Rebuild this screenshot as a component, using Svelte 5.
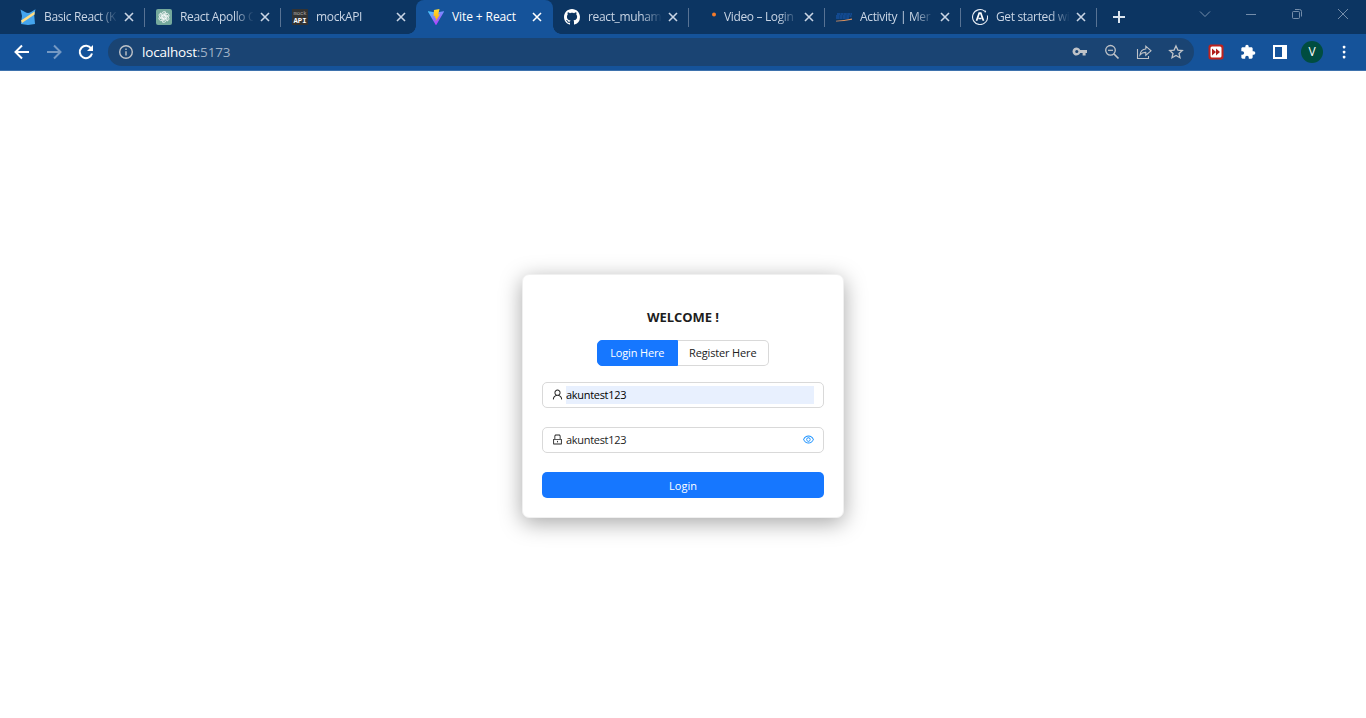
<script>
  const tabs = [
    { icon: 'kampus', title: 'Basic React (K' },
    { icon: 'gpt', title: 'React Apollo C' },
    { icon: 'mock', title: 'mockAPI' },
    { icon: 'vite', title: 'Vite + React', active: true },
    { icon: 'github', title: 'react_muham' },
    { icon: 'video', title: 'Video – Login' },
    { icon: 'activity', title: 'Activity | Mer' },
    { icon: 'apollo', title: 'Get started wi' }
  ];
  const petals = [0, 60, 120, 180, 240, 300];
</script>

<div class="browser">
  <div class="strip">
    {#each tabs as tab, i}
      <div class="tab" class:active={tab.active} class:divided={!tab.active && i !== 2}>
        <svg class="fav" viewBox="0 0 16 16">
          {#if tab.icon === 'kampus'}
            <path d="M.5 .5 5 3Q8 5 11 3L15.5 .3 14.2 6 15 15 8 16 1 15 2 7Z" fill="#45a5ee" />
            <path d="M1 11.6 14.6 2.6v2.8L2 14Z" fill="#ffdc83" />
          {:else if tab.icon === 'gpt'}
            <rect width="16" height="16" rx="2" fill="#75a99c" />
            <g fill="none" stroke="#fff" stroke-width=".75">
              {#each petals as a}
                <path d="M5.9 9.2V4.6Q6.2 2.7 8.1 2.6 9.3 2.6 10 3.4L6.9 5.2V8.6" transform="rotate({a} 8 8)" />
              {/each}
            </g>
          {:else if tab.icon === 'mock'}
            <rect width="16" height="16" fill="#333" />
            <text x="1.5" y="6" font-size="5.6" fill="#aaa" textLength="13">mock</text>
            <text x="1.5" y="13.6" font-size="7.2" font-weight="700" fill="#fff" textLength="13">API</text>
          {:else if tab.icon === 'vite'}
            <defs>
              <linearGradient id="tri" x1="0" y1="0" x2=".6" y2="1"><stop stop-color="#41d1ff" /><stop offset="1" stop-color="#bd34fe" /></linearGradient>
              <linearGradient id="bolt" x1="0" y1="0" x2="0" y2="1"><stop stop-color="#ffdd35" /><stop offset="1" stop-color="#ffa800" /></linearGradient>
            </defs>
            <path d="M.2 2.2 8 3.6 15.8 2.2Q16.2 2.4 16 2.8L8.4 15.8Q8 16.2 7.6 15.8L0 2.8Q-.2 2.3.2 2.2Z" fill="url(#tri)" />
            <path d="M11.5 0 6 1.1 5.6 7.2 7.3 6.9 6.8 9.3 8.2 9 7.6 12.6 12 5.2 10.2 5.5Z" fill="url(#bolt)" />
          {:else if tab.icon === 'github'}
            <path fill="#fff" d="M8 0C3.58 0 0 3.58 0 8c0 3.54 2.29 6.53 5.47 7.59.4.07.55-.17.55-.38 0-.19-.01-.82-.01-1.49-2.01.37-2.53-.49-2.69-.94-.09-.23-.48-.94-.82-1.13-.28-.15-.68-.52-.01-.53.63-.01 1.08.58 1.23.82.72 1.21 1.87.87 2.33.66.07-.52.28-.87.51-1.07-1.78-.2-3.64-.89-3.64-3.95 0-.87.31-1.59.82-2.15-.08-.2-.36-1.02.08-2.12 0 0 .67-.21 2.2.82.64-.18 1.32-.27 2-.27s1.36.09 2 .27c1.53-1.04 2.2-.82 2.2-.82.44 1.1.16 1.92.08 2.12.51.56.82 1.27.82 2.15 0 3.07-1.87 3.75-3.65 3.95.29.25.54.73.54 1.48 0 1.07-.01 1.93-.01 2.2 0 .21.15.46.55.38A8.01 8.01 0 0 0 16 8c0-4.42-3.58-8-8-8Z" />
          {:else if tab.icon === 'video'}
            <circle cx="14" cy="5.5" r="2" fill="#f67b29" />
          {:else if tab.icon === 'activity'}
            <path d="M1 5H16M0 7H15.5M0 9H13" stroke="#14509f" stroke-width="1.5" stroke-dasharray="3 .4" />
            <path d="M0 11.8Q8 11.6 16 9.6V10.7Q8 12.4 0 12.6Z" fill="#d99261" />
          {:else}
            <path d="M12.6 2.1A7.5 7.5 0 1 0 15.4 6.5" fill="none" stroke="#e4eaf3" stroke-width="1.1" />
            <circle cx="13.2" cy="2.5" r=".9" fill="#e4eaf3" />
            <path d="M4.5 11.7 7.2 4.2H8.8L11.5 11.7M6.5 9.5H9.5" fill="none" stroke="#fff" stroke-width="1.7" />
          {/if}
        </svg>
        <span class="title">{tab.title}</span>
        <svg class="close" viewBox="0 0 10 10"><path d="M1 1 9 9M9 1 1 9" /></svg>
      </div>
    {/each}
    <svg class="plus" viewBox="0 0 12 12"><path d="M6 0V12M0 6H12" /></svg>
    <div class="window">
      <svg viewBox="0 0 12 12"><path d="M1 3.5 6 8.5 11 3.5" /></svg>
      <svg viewBox="0 0 12 12"><path d="M1 6.5H11" /></svg>
      <svg viewBox="0 0 12 12"><rect x="1.5" y="3.5" width="7" height="7" rx="1" /><path d="M4 1.5H8.5Q10.5 1.5 10.5 3.5V8.5" /></svg>
      <svg viewBox="0 0 12 12"><path d="M1 1 11 11M11 1 1 11" /></svg>
    </div>
  </div>

  <div class="toolbar">
    <div class="nav">
      <svg viewBox="0 0 16 16"><path d="M15 8H2M8 1.5 1.5 8 8 14.5" /></svg>
      <svg class="dim" viewBox="0 0 16 16"><path d="M1 8H14M8 1.5 14.5 8 8 14.5" /></svg>
      <svg viewBox="0 0 16 16"><path d="M13.2 4.6A6.2 6.2 0 1 0 14 9.6" /><path d="M15 1V7H9Z" class="solid" /></svg>
    </div>
    <div class="address">
      <svg class="info" viewBox="0 0 16 16"><circle cx="8" cy="8" r="6.3" /><path d="M8 7.2V11.5M8 4.5V6" /></svg>
      <span class="url"><b>localhost</b>:5173</span>
      <div class="actions">
        <svg viewBox="0 0 16 16"><path class="key" fill-rule="evenodd" d="M8.2 6A4 4 0 1 0 8.2 9H10.6V11.5H13.6V9H15V6ZM4.8 5.9A1.6 1.6 0 1 1 4.8 9.1A1.6 1.6 0 1 1 4.8 5.9Z" /></svg>
        <svg viewBox="0 0 16 16"><circle cx="6.5" cy="6.3" r="4.8" stroke-width="1.3" /><path d="M4 6.3H9" stroke-width="1.2" /><path d="M10 10 14.5 14.5" stroke-width="1.7" /></svg>
        <svg viewBox="0 0 16 16"><path d="M1.5 5V14.5H12.5V12M4 11Q4.7 5.2 9.8 5V2.2L15 6.8 9.8 11.2V8.4Q6.2 8.2 4 11Z" stroke-width="1.1" /></svg>
        <svg viewBox="0 0 16 16"><path d="M8 1.9 9.9 6.1 14.3 6.5 11 9.5 12 13.8 8 11.5 4 13.8 5 9.5 1.7 6.5 6.1 6.1Z" stroke-width="1.3" /></svg>
      </div>
    </div>
    <div class="ext">
      <svg viewBox="0 0 16 16"><rect x=".5" y=".5" width="15" height="15" rx="2.5" fill="#bd221e" /><rect x="2.5" y="2.5" width="11" height="11" rx="1.5" fill="#fff" /><path d="M4 4.5 8 8 4 11.5ZM8 4.5 12 8 8 11.5Z" fill="#b01c1b" /></svg>
      <svg viewBox="0 0 24 24"><path fill="#fff" d="M20.5 11H19V7c0-1.1-.9-2-2-2h-4V3.5a2.5 2.5 0 0 0-5 0V5H4c-1.1 0-2 .9-2 2v3.8h1.5a2.7 2.7 0 0 1 0 5.4H2V20c0 1.1.9 2 2 2h3.8v-1.5a2.7 2.7 0 0 1 5.4 0V22H17c1.1 0 2-.9 2-2v-4h1.5a2.5 2.5 0 0 0 0-5z" /></svg>
      <svg viewBox="0 0 16 16"><path fill="#fff" fill-rule="evenodd" d="M1 1H15V15H1ZM3 3V13H10V3Z" /></svg>
      <span class="avatar">V</span>
      <svg viewBox="0 0 16 16"><g fill="#fff"><rect x="6.8" y="1.8" width="2.6" height="2.6" rx=".8" /><rect x="6.8" y="6.8" width="2.6" height="2.6" rx=".8" /><rect x="6.8" y="11.8" width="2.6" height="2.6" rx=".8" /></g></svg>
    </div>
  </div>

  <main>
    <form class="card">
      <h1>WELCOME !</h1>
      <div class="switch">
        <span class="on">Login Here</span><span class="off">Register Here</span>
      </div>
      <div class="field first">
        <svg viewBox="64 64 896 896"><path d="M858.5 763.6a374 374 0 00-80.6-119.5 375.63 375.63 0 00-119.5-80.6c-.4-.2-.8-.3-1.2-.5C719.5 518 760 444.7 760 362c0-137-111-248-248-248S264 225 264 362c0 82.7 40.5 156 102.8 201.1-.4.2-.8.3-1.2.5-44.8 18.9-85 46-119.5 80.6a375.63 375.63 0 00-80.6 119.5A371.7 371.7 0 00136 901.8a8 8 0 008 8.2h60c4.4 0 7.9-3.5 8-7.8 2-77.2 33-149.5 87.8-204.3 56.7-56.7 132-87.9 212.2-87.9s155.5 31.2 212.2 87.9C779 752.7 810 825 812 902.2c.1 4.4 3.6 7.8 8 7.8h60a8 8 0 008-8.2c-1-47.8-10.9-94.3-29.5-138.2zM512 534c-45.9 0-89.1-17.9-121.6-50.4S340 407.9 340 362c0-45.9 17.9-89.1 50.4-121.6S466.1 190 512 190s89.1 17.9 121.6 50.4S684 316.1 684 362c0 45.9-17.9 89.1-50.4 121.6S557.9 534 512 534z" /></svg>
        <span class="value filled">akuntest123</span>
      </div>
      <div class="field">
        <svg viewBox="64 64 896 896"><path d="M832 464h-68V240c0-70.7-57.3-128-128-128H388c-70.7 0-128 57.3-128 128v224h-68c-17.7 0-32 14.3-32 32v384c0 17.7 14.3 32 32 32h640c17.7 0 32-14.3 32-32V496c0-17.7-14.3-32-32-32zM332 240c0-30.9 25.1-56 56-56h248c30.9 0 56 25.1 56 56v224H332V240zm460 600H232V536h560v304zM484 701v53c0 4.4 3.6 8 8 8h40c4.4 0 8-3.6 8-8v-53a48.01 48.01 0 10-56 0z" /></svg>
        <span class="value">akuntest123</span>
        <svg class="eye" viewBox="64 64 896 896"><path d="M942.2 486.2C847.4 286.5 704.1 186 512 186c-192.2 0-335.4 100.5-430.2 300.3a60.3 60.3 0 000 51.5C176.6 737.5 319.9 838 512 838c192.2 0 335.4-100.5 430.2-300.3 7.7-16.2 7.7-35 0-51.5zM512 766c-161.3 0-279.4-81.8-362.7-254C232.6 339.8 350.7 258 512 258c161.3 0 279.4 81.8 362.7 254C791.5 684.2 673.4 766 512 766zm-4-430c-97.2 0-176 78.8-176 176s78.8 176 176 176 176-78.8 176-176-78.8-176-176-176zm0 288c-61.9 0-112-50.1-112-112s50.1-112 112-112 112 50.1 112 112-50.1 112-112 112z" /></svg>
      </div>
      <div class="submit">Login</div>
    </form>
  </main>
</div>

<style>
  :global(body) { margin: 0; background: #fff; overflow: hidden; }
  .browser { height: 718px; display: flex; flex-direction: column; font-family: "Open Sans", "Noto Sans", sans-serif; }
  svg { display: block; flex: none; }
  .strip { height: 34px; background: #0c3562; display: flex; align-items: center; padding-left: 8px; box-sizing: border-box; }
  .tab { position: relative; width: 136px; height: 34px; box-sizing: border-box; padding: 0 11px 0 12px; display: flex; align-items: center; color: #c9d5e5; }
  .tab.divided::after { content: ""; position: absolute; right: -1px; top: 8px; width: 1px; height: 19px; background: #587394; }
  .tab.active { background: #15539a; color: #fff; border-radius: 8px 8px 0 0; width: 137px; margin-right: -1px; z-index: 1; }
  .tab.active::before, .tab.active::after { content: ""; position: absolute; bottom: 0; width: 8px; height: 8px; }
  .tab.active::before { left: -8px; background: radial-gradient(circle at 0 0, transparent 7.5px, #15539a 8px); }
  .tab.active::after { right: -8px; background: radial-gradient(circle at 100% 0, transparent 7.5px, #15539a 8px); }
  .fav { width: 16px; height: 16px; margin-right: 8px; font-family: "Liberation Mono", monospace; }
  .title { flex: none; width: 73px; margin-right: 7px; white-space: nowrap; font-size: 12px; line-height: 18px; letter-spacing: -.35px; mask-image: linear-gradient(90deg, #000 54px, transparent 74px); }
  .active .title { mask-image: none; letter-spacing: -.1px; }
  .close { width: 10px; height: 10px; stroke: currentColor; stroke-width: 1.6; }
  .plus { width: 12px; height: 12px; margin-left: 17px; stroke: #dce5ef; stroke-width: 2; }
  .window { display: flex; gap: 34px; margin: -6px 0 0 74px; }
  .window svg { width: 12px; height: 12px; fill: none; stroke: #8097b2; stroke-width: .9; }
  .toolbar { height: 37px; box-sizing: border-box; background: #15539a; border-bottom: 1px solid #3e72ad; display: flex; align-items: center; }
  .nav { display: flex; gap: 16px; padding-left: 14px; width: 94px; }
  .nav svg { width: 16px; height: 16px; fill: none; stroke: #fff; stroke-width: 2; }
  .nav .dim { stroke: #7599c3; }
  .nav .solid { fill: #fff; stroke: none; }
  .address { width: 1086px; height: 28px; border-radius: 14px; background: #1a4473; display: flex; align-items: center; padding: 0 10px; box-sizing: border-box; }
  .address svg { width: 16px; height: 16px; fill: none; stroke: #bfc3c8; stroke-width: 1.4; }
  .address .key { fill: #bfc3c8; stroke: none; }
  .url { margin-left: 8px; font-size: 13.5px; color: #9fb1c6; letter-spacing: -.2px; }
  .url b { color: #fff; font-weight: 400; }
  .actions { margin-left: auto; display: flex; gap: 16px; }
  .ext { display: flex; align-items: center; margin-left: 14px; gap: 16px; }
  .ext svg { width: 16px; height: 16px; }
  .avatar { width: 22px; height: 22px; margin: 0 -3px; border-radius: 50%; background: #004d40; color: #fff; font-size: 12px; line-height: 22px; text-align: center; }
  main { flex: 1; display: flex; justify-content: center; align-items: flex-start; padding-top: 203px; background: #fff; }
  .card { width: 322px; height: 244px; box-sizing: border-box; padding: 33px 19px 0; border-radius: 7px; border: 1px solid #f0f0f0; background: #fff; box-shadow: 0 5px 22px rgba(0,0,0,.35); display: flex; flex-direction: column; align-items: center; }
  h1 { margin: 0; font-size: 13px; line-height: 18px; font-weight: 700; color: #1d1d1d; letter-spacing: -.05px; }
  .switch { display: flex; margin-top: 13.5px; font-size: 11px; line-height: 24px; height: 26px; }
  .switch span { box-sizing: border-box; border: 1px solid #d9d9d9; text-align: center; white-space: nowrap; letter-spacing: -.15px; }
  .switch .on { width: 80.5px; background: #1677ff; color: #fff; border-color: #1677ff; border-radius: 5px 0 0 5px; }
  .switch .off { width: 91.5px; color: #222; border-left: 0; border-radius: 0 5px 5px 0; }
  .field { width: 282px; height: 26px; margin-top: 19px; box-sizing: border-box; border: 1px solid #d9d9d9; border-radius: 5px; padding: 0 9px; display: flex; align-items: center; }
  .field.first { margin-top: 16px; }
  .field svg { width: 11px; height: 11px; margin-right: 3px; fill: #222; }
  .field .eye { margin: 0; fill: #1890ff; }
  .value { flex: 1; height: 18px; line-height: 18px; font-size: 11px; letter-spacing: -.3px; color: #222; }
  .filled { background: #e8f0fe; color: #000; }
  .submit { width: 282px; height: 26px; margin-top: 19px; border-radius: 5px; background: #1677ff; color: #fff; text-align: center; font-size: 11px; line-height: 27px; }
</style>
